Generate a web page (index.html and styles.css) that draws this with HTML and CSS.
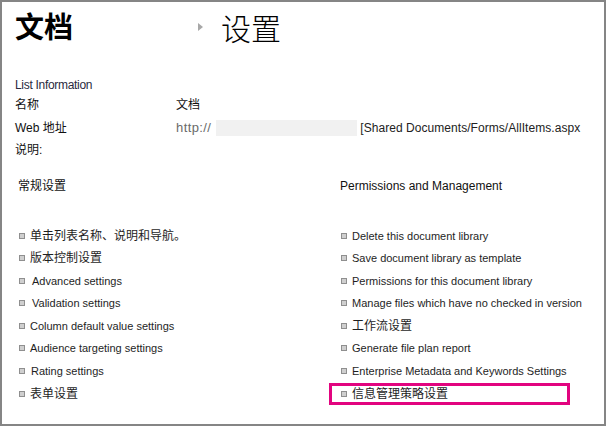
FILE: index.html
```html
<!DOCTYPE html>
<html lang="zh-CN">
<head>
<meta charset="utf-8">
<title>文档 设置</title>
<link rel="stylesheet" href="styles.css">
</head>
<body>
<div class="frame">
  <header class="title">
    <span class="t-lib">文档</span>
    <span class="arrow"></span>
    <span class="t-page">设置</span>
  </header>
  <section class="info">
    <div class="info-h">List Information</div>
    <div class="row"><span class="lab">名称</span><span class="val">文档</span></div>
    <div class="row"><span class="lab">Web 地址</span><span class="val url"><span class="proto">http://</span><span class="mask"></span><span class="path">[Shared Documents/Forms/AllItems.aspx</span></span></div>
    <div class="row"><span class="lab">说明:</span></div>
  </section>
  <div class="cols">
    <div class="col col-left">
      <h2 class="col-h">常规设置</h2>
      <ul class="links">
        <li class="zh">单击列表名称、说明和导航。</li>
        <li class="zh">版本控制设置</li>
        <li class="ind">Advanced settings</li>
        <li class="ind">Validation settings</li>
        <li>Column default value settings</li>
        <li>Audience targeting settings</li>
        <li class="ind1">Rating settings</li>
        <li class="zh">表单设置</li>
      </ul>
    </div>
    <div class="col col-right">
      <h2 class="col-h">Permissions and Management</h2>
      <ul class="links">
        <li>Delete this document library</li>
        <li>Save document library as template</li>
        <li>Permissions for this document library</li>
        <li>Manage files which have no checked in version</li>
        <li class="zh">工作流设置</li>
        <li>Generate file plan report</li>
        <li>Enterprise Metadata and Keywords Settings</li>
        <li class="zh hl">信息管理策略设置</li>
      </ul>
    </div>
  </div>
</div>
</body>
</html>
```
FILE: styles.css
```css
html, body {
  margin: 0;
  padding: 0;
  background: #fff;
}
body {
  font-family: "Liberation Sans", "Noto Sans CJK SC", sans-serif;
  font-size: 12px;
  color: #1e1e1e;
}
.frame {
  box-sizing: border-box;
  width: 606px;
  height: 426px;
  border: 2px solid #858585;
  padding: 0 0 0 13px;
  overflow: hidden;
}
.title {
  display: flex;
  align-items: center;
  height: 45px;
  padding-top: 1px;
  box-sizing: border-box;
  font-family: "Noto Sans CJK SC", sans-serif;
  color: #000;
}
.t-lib {
  font-size: 29px;
  font-weight: 700;
  line-height: 40px;
  width: 183px;
}
.arrow {
  width: 0;
  height: 0;
  border-top: 4px solid transparent;
  border-bottom: 4px solid transparent;
  border-left: 5px solid #a8a8a8;
  margin: 4px 18px 0 0;
}
.t-page {
  font-size: 30px;
  font-weight: 300;
  line-height: 40px;
  margin-top: 3px;
}
.info {
  margin-top: 29px;
}
.info-h {
  line-height: 18px;
  color: #2a2a40;
  letter-spacing: -0.3px;
}
.row {
  display: flex;
  line-height: 22.5px;
  height: 22.5px;
}
.lab {
  width: 161px;
  color: #111;
}
.val {
  color: #111;
}
.url {
  display: flex;
  align-items: center;
}
.proto {
  color: #6a6a6a;
  font-size: 13px;
  letter-spacing: 0.4px;
}
.mask {
  width: 141px;
  height: 16px;
  background: #f1f1f1;
  margin: 0 3px 0 5px;
}
.path {
  color: #222;
  letter-spacing: 0.05px;
}
.cols {
  display: flex;
  margin-top: 14px;
  padding-left: 3px;
}
.col-left {
  flex: none;
  width: 322px;
}
.col-right {
  flex: 1;
  min-width: 0;
}
.col-h {
  margin: 0;
  font-weight: 400;
  font-size: 12px;
  line-height: 20px;
  color: #111;
}
.links {
  list-style: none;
  margin: 29px 0 0 0;
  padding: 0;
}
.links li {
  position: relative;
  font-size: 11px;
  line-height: 22.6px;
  height: 22.6px;
  padding-left: 12px;
  color: #1e1e1e;
  white-space: nowrap;
}
.links li.zh {
  font-size: 12px;
}
.links li::before {
  content: "";
  position: absolute;
  left: 1px;
  top: 8px;
  width: 4px;
  height: 4px;
  background: #cfcfcf;
  border: 1px solid #8f8f8f;
}
.links li.ind {
  padding-left: 14px;
}
.links li.ind1 {
  padding-left: 13px;
}
.links li.hl::after {
  content: "";
  position: absolute;
  left: -11px;
  top: 0;
  width: 235px;
  height: 16px;
  border: 3px solid #e2047f;
}
```
